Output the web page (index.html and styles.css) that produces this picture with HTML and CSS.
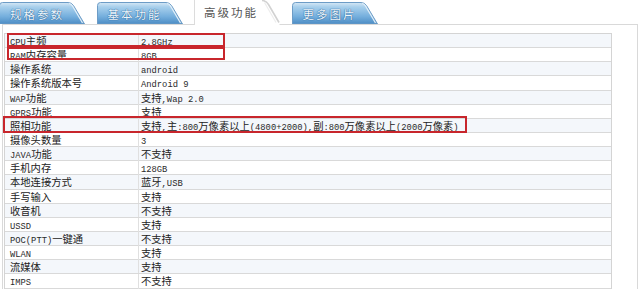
FILE: index.html
```html
<!DOCTYPE html>
<html lang="zh-CN">
<head>
<meta charset="utf-8">
<title>高级功能</title>
<link rel="stylesheet" href="styles.css">
</head>
<body>
<div class="tabs">
  <div class="tab tab-blue">
    <svg class="tab-bg" width="86" height="22" viewBox="0 0 86 22"><defs><linearGradient id="g1" x1="0" y1="0" x2="0" y2="1"><stop offset="0" stop-color="#d6e8f5"/><stop offset="0.2" stop-color="#a9d0ec"/><stop offset="0.65" stop-color="#75afdd"/><stop offset="1" stop-color="#4c8cc4"/></linearGradient></defs><path d="M0.5 22 V3.5 Q0.5 0.5 3.5 0.5 H69 Q72.5 0.5 74.5 3.5 L85.5 22 Z" fill="url(#g1)" stroke="#6d9cc6"/><path d="M70 1.5 Q72 1.5 73.5 4 L83.5 21" fill="none" stroke="#e4f0f9" stroke-width="1.2"/></svg>
    <span class="tab-label">规格参数</span>
  </div>
  <div class="tab tab-blue">
    <svg class="tab-bg" width="86" height="22" viewBox="0 0 86 22"><path d="M0.5 22 V3.5 Q0.5 0.5 3.5 0.5 H69 Q72.5 0.5 74.5 3.5 L85.5 22 Z" fill="url(#g1)" stroke="#6d9cc6"/><path d="M70 1.5 Q72 1.5 73.5 4 L83.5 21" fill="none" stroke="#e4f0f9" stroke-width="1.2"/></svg>
    <span class="tab-label">基本功能</span>
  </div>
  <div class="tab tab-active">
    <svg class="tab-bg" width="86" height="25" viewBox="0 0 86 25"><path d="M0.5 25 V0 H68 Q72 0 74.5 4 L85.5 23 V25 Z" fill="#ffffff"/><path d="M0.5 25 V0" stroke="#dcdcdc" fill="none"/><path d="M68 0.5 Q72 0.5 74.5 4.5 L85 22.5" fill="none" stroke="#d2d2d2" stroke-width="1.6"/><path d="M70.5 2.5 L82 22.5" fill="none" stroke="#ededed" stroke-width="1.2"/></svg>
    <span class="tab-label">高级功能</span>
  </div>
  <div class="tab tab-blue">
    <svg class="tab-bg" width="86" height="22" viewBox="0 0 86 22"><path d="M0.5 22 V3.5 Q0.5 0.5 3.5 0.5 H69 Q72.5 0.5 74.5 3.5 L85.5 22 Z" fill="url(#g1)" stroke="#6d9cc6"/><path d="M70 1.5 Q72 1.5 73.5 4 L83.5 21" fill="none" stroke="#e4f0f9" stroke-width="1.2"/></svg>
    <span class="tab-label">更多图片</span>
  </div>
</div>
<div class="panel">
  <div class="specs">
    <div class="row"><div class="key"><span class="en">CPU</span>主频</div><div class="val"><span class="en">2.8GHz</span></div></div>
    <div class="row"><div class="key"><span class="en">RAM</span>内存容量</div><div class="val"><span class="en">8GB</span></div></div>
    <div class="row"><div class="key">操作系统</div><div class="val"><span class="en">android</span></div></div>
    <div class="row"><div class="key">操作系统版本号</div><div class="val"><span class="en">Android 9</span></div></div>
    <div class="row"><div class="key"><span class="en">WAP</span>功能</div><div class="val">支持<span class="en">,Wap 2.0</span></div></div>
    <div class="row"><div class="key"><span class="en">GPRS</span>功能</div><div class="val">支持</div></div>
    <div class="row"><div class="key">照相功能</div><div class="val">支持<span class="en">,</span>主<span class="en">:800</span>万像素以上<span class="en">(4800+2000),</span>副<span class="en">:800</span>万像素以上<span class="en">(2000</span>万像素<span class="en">)</span></div></div>
    <div class="row"><div class="key">摄像头数量</div><div class="val"><span class="en">3</span></div></div>
    <div class="row"><div class="key"><span class="en">JAVA</span>功能</div><div class="val">不支持</div></div>
    <div class="row"><div class="key">手机内存</div><div class="val"><span class="en">128GB</span></div></div>
    <div class="row"><div class="key">本地连接方式</div><div class="val">蓝牙<span class="en">,USB</span></div></div>
    <div class="row"><div class="key">手写输入</div><div class="val">支持</div></div>
    <div class="row"><div class="key">收音机</div><div class="val">不支持</div></div>
    <div class="row"><div class="key"><span class="en">USSD</span></div><div class="val">支持</div></div>
    <div class="row"><div class="key"><span class="en">POC(PTT)</span>一键通</div><div class="val">不支持</div></div>
    <div class="row"><div class="key"><span class="en">WLAN</span></div><div class="val">支持</div></div>
    <div class="row"><div class="key">流媒体</div><div class="val">支持</div></div>
    <div class="row"><div class="key"><span class="en">IMPS</span></div><div class="val">不支持</div></div>
    <div class="mark mark-cpu"></div>
    <div class="mark mark-ram"></div>
    <div class="mark mark-camera"></div>
  </div>
</div>
</body>
</html>
```
FILE: styles.css
```css
html, body {
  margin: 0;
  padding: 0;
  background: #ffffff;
}
body {
  width: 640px;
  height: 289px;
  overflow: hidden;
  font-family: "Noto Sans CJK SC", sans-serif;
  font-size: 10.3px;
  color: #222222;
}
.tabs {
  display: flex;
  align-items: flex-end;
  gap: 11.5px;
  height: 24px;
  margin-left: -1px;
}
.tab {
  position: relative;
  width: 86px;
  flex: none;
  display: flex;
  align-items: center;
}
.tab-bg {
  position: absolute;
  left: 0;
  top: 0;
  display: block;
}
.tab-blue {
  height: 22px;
}
.tab-active {
  height: 25px;
  margin-bottom: -1px;
  z-index: 1;
}
.tab-label {
  position: relative;
  padding-left: 11px;
  font-size: 11.5px;
  letter-spacing: 2px;
  line-height: 14px;
}
.tab-blue .tab-label {
  color: #eef6fc;
  text-shadow: 0 0 1px #235f94, 0 0 1px #235f94;
  margin-top: 1px;
}
.tab-active .tab-label {
  color: #555555;
  padding-left: 10px;
  margin-top: -1px;
}
.panel {
  margin-left: 2px;
  width: 636px;
  height: 265px;
  overflow: hidden;
  box-sizing: border-box;
  border: 1px solid #d9d9d9;
  border-bottom: none;
  padding-top: 8px;
  padding-left: 1px;
}
.specs {
  position: relative;
  width: 608px;
  box-sizing: border-box;
  border: 1px solid #d4d4d4;
  border-bottom: none;
}
.row {
  display: grid;
  grid-template-columns: 133px 1fr;
  height: 14.15px;
  box-sizing: border-box;
  border-bottom: 1px solid #d9d9d9;
  line-height: 13px;
  white-space: nowrap;
}
.row:nth-child(odd) {
  background: #f4f7fb;
}
.key {
  padding-left: 5px;
}
.val {
  padding-left: 2px;
  border-left: 1px solid #e0e0e0;
}
.en {
  font-family: "Liberation Mono", monospace;
  font-size: 8.8px;
  color: #2a2a2a;
}
.mark {
  position: absolute;
  box-sizing: border-box;
  border: 2px solid #c8262c;
}
.mark-cpu {
  left: 2px;
  top: -1px;
  width: 218px;
  height: 13.5px;
}
.mark-ram {
  left: 2px;
  top: 12.5px;
  width: 218px;
  height: 13.5px;
}
.mark-camera {
  left: -2px;
  top: 82px;
  width: 464px;
  height: 17px;
}
```
